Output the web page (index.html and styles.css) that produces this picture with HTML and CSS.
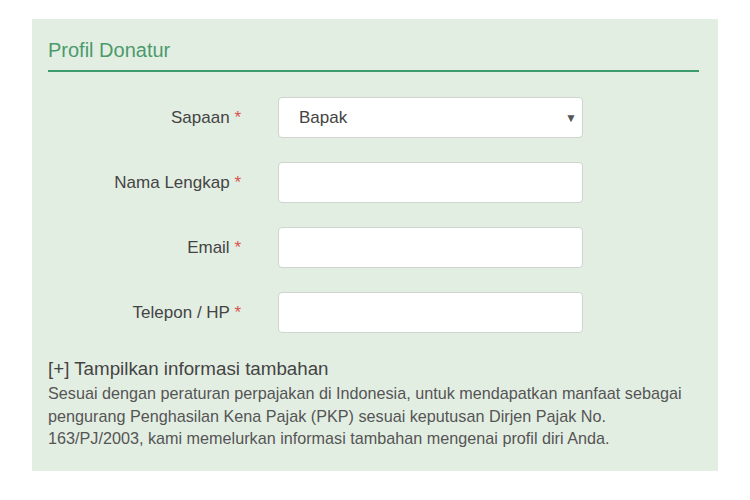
FILE: index.html
```html
<!DOCTYPE html>
<html lang="id">
<head>
<meta charset="utf-8">
<title>Profil Donatur</title>
<link rel="stylesheet" href="styles.css">
</head>
<body>
<section class="panel">
  <h2 class="panel-title">Profil Donatur</h2>
  <form class="form">
    <div class="row">
      <label class="label">Sapaan <span class="req">*</span></label>
      <div class="select">
        <span class="select-value">Bapak</span>
        <span class="select-arrow">&#9660;</span>
      </div>
    </div>
    <div class="row">
      <label class="label">Nama Lengkap <span class="req">*</span></label>
      <div class="input"></div>
    </div>
    <div class="row">
      <label class="label">Email <span class="req">*</span></label>
      <div class="input"></div>
    </div>
    <div class="row">
      <label class="label">Telepon / HP <span class="req">*</span></label>
      <div class="input"></div>
    </div>
  </form>
  <div class="more">[+] Tampilkan informasi tambahan</div>
  <p class="note">Sesuai dengan peraturan perpajakan di Indonesia, untuk mendapatkan manfaat sebagai pengurang Penghasilan Kena Pajak (PKP) sesuai keputusan Dirjen Pajak No. 163/PJ/2003, kami memelurkan informasi tambahan mengenai profil diri Anda.</p>
</section>
</body>
</html>
```
FILE: styles.css
```css
html, body {
  margin: 0;
  padding: 0;
  background: #ffffff;
}
body {
  font-family: "Liberation Sans", Arial, sans-serif;
  color: #333333;
}
.panel {
  margin: 19px 0 0 32px;
  width: 686px;
  box-sizing: border-box;
  background: #e3eee3;
  padding: 0 19px 21px 16px;
}
.panel-title {
  margin: 0;
  padding: 20px 0 9px;
  font-size: 20px;
  font-weight: normal;
  line-height: 22px;
  color: #4a9a6c;
  border-bottom: 2px solid #3d9a6d;
}
.form {
  padding-top: 25px;
  display: flex;
  flex-direction: column;
  gap: 24px;
}
.row {
  display: grid;
  grid-template-columns: 193px 305px;
  column-gap: 37px;
  align-items: center;
}
.label {
  text-align: right;
  font-size: 17px;
  color: #444444;
}
.req {
  color: #d9534f;
}
.select, .input {
  height: 41px;
  box-sizing: border-box;
  background: #ffffff;
  border: 1px solid #cfd4cf;
  border-radius: 4px;
}
.select {
  display: flex;
  align-items: center;
  justify-content: space-between;
  padding: 0 5px 0 20px;
  font-size: 17px;
  color: #444444;
}
.select-arrow {
  font-size: 12px;
  color: #555555;
}
.more {
  margin-top: 25px;
  font-size: 18.75px;
  line-height: 22px;
  color: #444444;
}
.note {
  margin: 2px 0 0;
  font-size: 16.2px;
  line-height: 22.5px;
  color: #555555;
}
```
